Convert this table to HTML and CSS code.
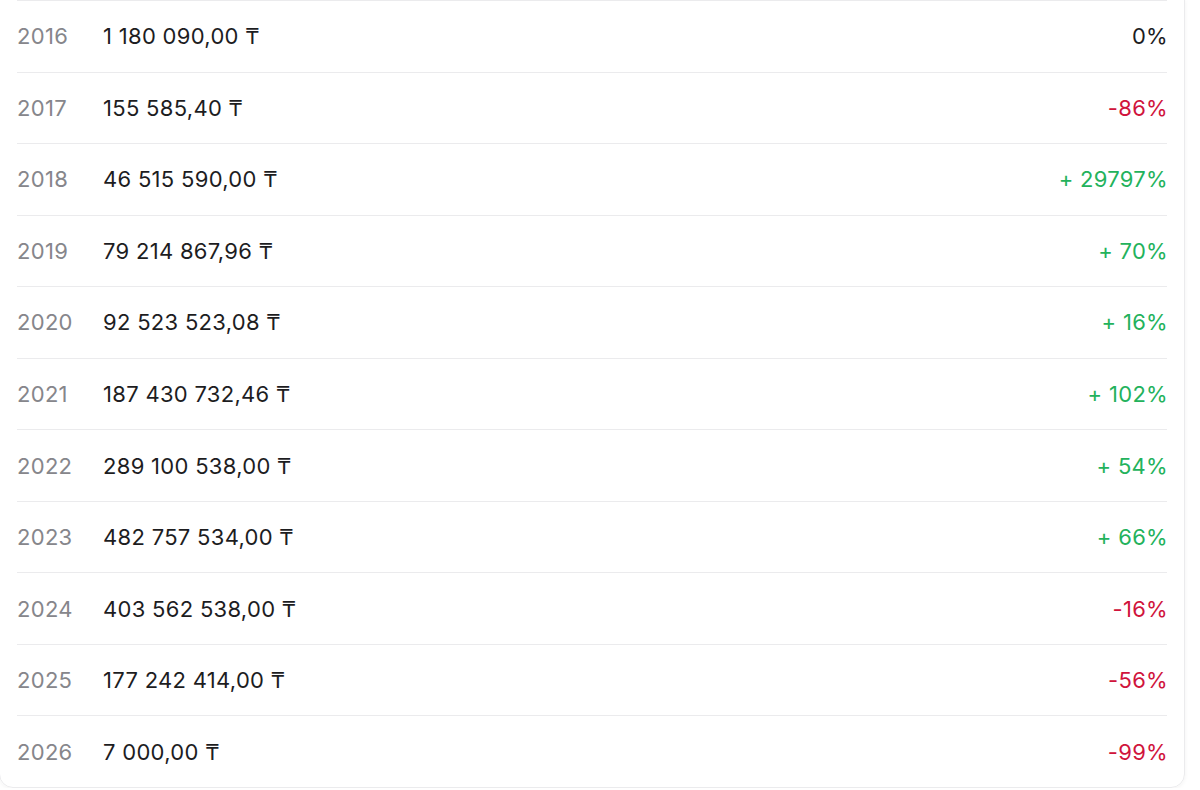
FILE: index.html
```html
<!DOCTYPE html>
<html lang="ru">
<head>
    <meta charset="UTF-8">
    <meta name="viewport" content="width=device-width, initial-scale=1.0">
    <title>Доход по годам</title>
    <link rel="stylesheet" href="styles.css">
</head>
<body>
    <div class="card">
        <div class="row"><span class="year">2016</span><span class="amount">1 180 090,00 ₸</span><span class="change">0%</span></div>
        <div class="row"><span class="year">2017</span><span class="amount">155 585,40 ₸</span><span class="change down">-86%</span></div>
        <div class="row"><span class="year">2018</span><span class="amount">46 515 590,00 ₸</span><span class="change up">+ 29797%</span></div>
        <div class="row"><span class="year">2019</span><span class="amount">79 214 867,96 ₸</span><span class="change up">+ 70%</span></div>
        <div class="row"><span class="year">2020</span><span class="amount">92 523 523,08 ₸</span><span class="change up">+ 16%</span></div>
        <div class="row"><span class="year">2021</span><span class="amount">187 430 732,46 ₸</span><span class="change up">+ 102%</span></div>
        <div class="row"><span class="year">2022</span><span class="amount">289 100 538,00 ₸</span><span class="change up">+ 54%</span></div>
        <div class="row"><span class="year">2023</span><span class="amount">482 757 534,00 ₸</span><span class="change up">+ 66%</span></div>
        <div class="row"><span class="year">2024</span><span class="amount">403 562 538,00 ₸</span><span class="change down">-16%</span></div>
        <div class="row"><span class="year">2025</span><span class="amount">177 242 414,00 ₸</span><span class="change down">-56%</span></div>
        <div class="row"><span class="year">2026</span><span class="amount">7 000,00 ₸</span><span class="change down">-99%</span></div>
    </div>
</body>
</html>
```

FILE: styles.css
```css
:root {
    --text: #1d1d1f;
    --text-secondary: #86868b;
    --line: #ebebed;
    --up: #23b25c;
    --down: #d0143c;
}

body {
    margin: 0;
    background: #fff;
    font-family: 'Inter', 'Noto Sans', sans-serif;
    color: var(--text);
}

.card {
    width: 1186px;
    margin: -1px 0 0 -1px;
    padding: 0 17px;
    box-sizing: border-box;
    border: 1px solid var(--line);
    border-radius: 0 0 14px 14px;
    box-shadow: 0 1px 4px rgba(0,0,0,0.05);
}

.row {
    display: flex;
    align-items: center;
    height: 71.55px;
    box-sizing: border-box;
    border-top: 1px solid var(--line);
    font-size: 22px;
    letter-spacing: 0.3px;
}

.year {
    width: 86px;
    color: var(--text-secondary);
}

.amount {
    flex: 1;
}

.change {
    text-align: right;
    margin-right: -1px;
}

.change.up {
    color: var(--up);
}

.change.down {
    color: var(--down);
}
```
